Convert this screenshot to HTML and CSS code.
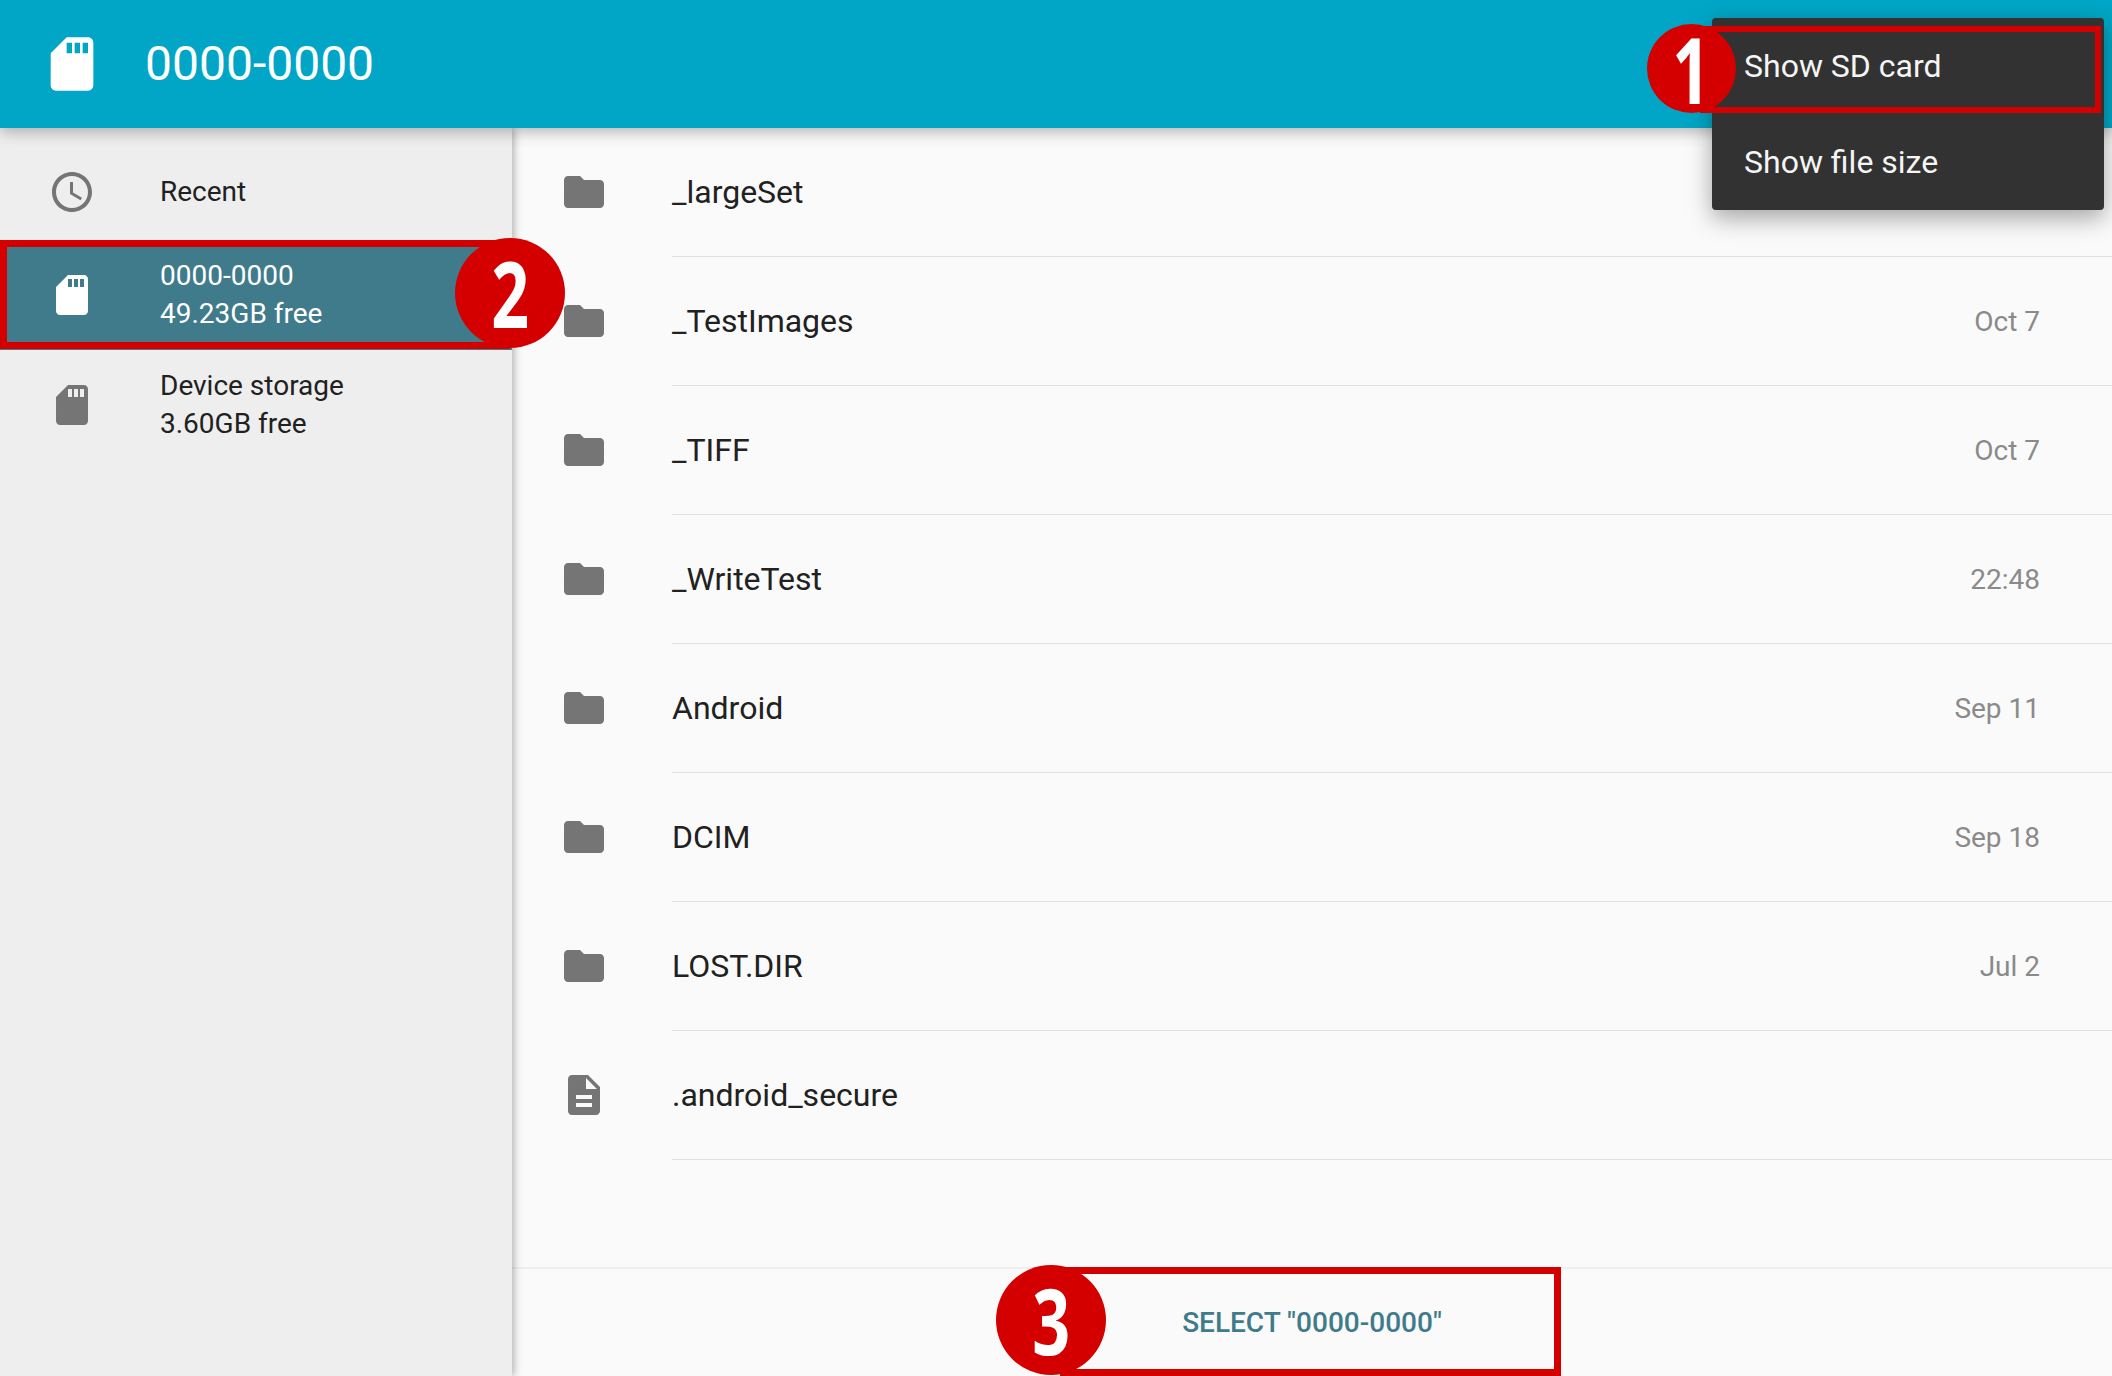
FILE: index.html
```html
<!DOCTYPE html>
<html lang="en">
<head>
<meta charset="utf-8">
<title>0000-0000</title>
<link rel="stylesheet" href="styles.css">
</head>
<body>
<div class="app">
  <svg class="defs" width="0" height="0" aria-hidden="true">
    <symbol id="sd" viewBox="0 0 24 24"><path d="M18 2h-8L4.02 8 4 20c0 1.1.9 2 2 2h12c1.1 0 2-.9 2-2V4c0-1.1-.9-2-2-2zm-6 6h-2V4h2v4zm3 0h-2V4h2v4zm3 0h-2V4h2v4z"/></symbol>
    <symbol id="clock" viewBox="0 0 24 24"><path d="M11.99 2C6.47 2 2 6.48 2 12s4.47 10 9.99 10C17.52 22 22 17.52 22 12S17.52 2 11.99 2zM12 20c-4.42 0-8-3.58-8-8s3.58-8 8-8 8 3.58 8 8-3.58 8-8 8zm.5-13H11v6l5.25 3.15.75-1.23-4.5-2.67z"/></symbol>
    <symbol id="folder" viewBox="0 0 24 24"><path d="M10 4H4c-1.1 0-1.99.9-1.99 2L2 18c0 1.1.9 2 2 2h16c1.1 0 2-.9 2-2V8c0-1.1-.9-2-2-2h-8l-2-2z"/></symbol>
    <symbol id="doc" viewBox="0 0 24 24"><path d="M14 2H6c-1.1 0-1.99.9-1.99 2L4 20c0 1.1.89 2 1.99 2H18c1.1 0 2-.9 2-2V8l-6-6zm2 16H8v-2h8v2zm0-4H8v-2h8v2zm-3-5V3.5L18.5 9H13z"/></symbol>
  </svg>

  <header class="appbar">
    <svg class="appbar-icon"><use href="#sd"/></svg>
    <h1 class="appbar-title">0000-0000</h1>
  </header>

  <div class="content">
    <nav class="sidebar">
      <div class="nav-item nav-single">
        <svg class="nav-icon"><use href="#clock"/></svg>
        <div class="nav-text"><div>Recent</div></div>
      </div>
      <div class="nav-item nav-active">
        <svg class="nav-icon"><use href="#sd"/></svg>
        <div class="nav-text"><div>0000-0000</div><div>49.23GB free</div></div>
      </div>
      <div class="nav-item">
        <svg class="nav-icon"><use href="#sd"/></svg>
        <div class="nav-text"><div>Device storage</div><div>3.60GB free</div></div>
      </div>
    </nav>

    <main class="main">
      <div class="list">
        <div class="row"><svg class="row-icon"><use href="#folder"/></svg><div class="row-body"><span class="row-name">_largeSet</span></div></div>
        <div class="row"><svg class="row-icon"><use href="#folder"/></svg><div class="row-body"><span class="row-name">_TestImages</span><span class="row-date">Oct 7</span></div></div>
        <div class="row"><svg class="row-icon"><use href="#folder"/></svg><div class="row-body"><span class="row-name">_TIFF</span><span class="row-date">Oct 7</span></div></div>
        <div class="row"><svg class="row-icon"><use href="#folder"/></svg><div class="row-body"><span class="row-name">_WriteTest</span><span class="row-date">22:48</span></div></div>
        <div class="row"><svg class="row-icon"><use href="#folder"/></svg><div class="row-body"><span class="row-name">Android</span><span class="row-date">Sep 11</span></div></div>
        <div class="row"><svg class="row-icon"><use href="#folder"/></svg><div class="row-body"><span class="row-name">DCIM</span><span class="row-date">Sep 18</span></div></div>
        <div class="row"><svg class="row-icon"><use href="#folder"/></svg><div class="row-body"><span class="row-name">LOST.DIR</span><span class="row-date">Jul 2</span></div></div>
        <div class="row"><svg class="row-icon"><use href="#doc"/></svg><div class="row-body"><span class="row-name">.android_secure</span></div></div>
      </div>
      <footer class="footer"><span class="select-btn">SELECT "0000-0000"</span></footer>
    </main>
  </div>

  <div class="menu">
    <div class="menu-item">Show SD card</div>
    <div class="menu-item">Show file size</div>
  </div>

  <div class="mark-box box-one"></div>
  <div class="mark-box box-two"></div>
  <div class="mark-box box-three"></div>
  <div class="badge badge-one"><span>1</span></div>
  <div class="badge badge-two"><span>2</span></div>
  <div class="badge badge-three"><span>3</span></div>
</div>
</body>
</html>
```

FILE: styles.css
```css
* { box-sizing: border-box; }
html, body { margin: 0; padding: 0; }
body { font-family: Roboto, "Liberation Sans", sans-serif; color: #212121; background: #fafafa; }

.defs { position: absolute; }

.app {
  position: relative;
  width: 2112px;
  height: 1376px;
  overflow: hidden;
  display: flex;
  flex-direction: column;
}

.appbar {
  position: relative;
  z-index: 3;
  flex: 0 0 128px;
  display: flex;
  align-items: center;
  padding-left: 40px;
  background: #01a6c6;
  box-shadow: 0 4px 14px rgba(0, 0, 0, 0.28);
}
.appbar-icon { width: 64px; height: 64px; fill: #fff; flex: none; }
.appbar-title {
  margin: 0 0 0 41px;
  font-size: 48px;
  font-weight: 400;
  color: #fff;
  line-height: 64px;
}

.content { flex: 1; display: flex; min-height: 0; }

.sidebar {
  position: relative;
  z-index: 2;
  flex: 0 0 512px;
  padding-top: 16px;
  background: #eeeeee;
  box-shadow: 2px 0 8px rgba(0, 0, 0, 0.3);
}
.nav-item {
  height: 110px;
  display: flex;
  align-items: center;
  padding-left: 48px;
  color: #212121;
}
.nav-single { height: 96px; }
.nav-item:last-child { height: 109px; }
.nav-icon { width: 48px; height: 48px; fill: #757575; flex: none; }
.nav-text { margin-left: 64px; font-size: 28px; line-height: 38px; }
.nav-active { background: #407b8b; color: #fff; }
.nav-active .nav-icon { fill: #fff; }

.main { flex: 1; display: flex; flex-direction: column; background: #fafafa; min-width: 0; }
.list { flex: 1; }
.row { height: 129px; display: flex; align-items: stretch; padding-left: 48px; }
.row-icon { width: 48px; height: 48px; fill: #757575; flex: none; margin-top: 40px; }
.row-body {
  flex: 1;
  margin-left: 64px;
  padding: 0 72px 0 0;
  display: flex;
  align-items: center;
  justify-content: space-between;
  border-bottom: 1px solid #e0e0e0;
}
.row-name { font-size: 32px; color: #212121; }
.row-date { font-size: 28px; color: #8a8a8a; }

.footer {
  flex: 0 0 109px;
  display: flex;
  align-items: center;
  justify-content: center;
  border-top: 2px solid #efefef;
  background: #fafafa;
}
.select-btn { font-size: 28px; font-weight: 500; color: #407b8b; }

.menu {
  position: absolute;
  z-index: 4;
  left: 1712px;
  top: 18px;
  width: 392px;
  height: 192px;
  background: #323232;
  border-radius: 4px;
  box-shadow: 0 8px 24px rgba(0, 0, 0, 0.35);
}
.menu-item {
  height: 96px;
  display: flex;
  align-items: center;
  padding-left: 32px;
  font-size: 32px;
  color: #f5f5f5;
}

.mark-box { position: absolute; z-index: 5; border: 7px solid #d40000; }
.box-one { left: 1700px; top: 26px; width: 401px; height: 87px; border-width: 6px; }
.box-two { left: 0; top: 240px; width: 510px; height: 109px; }
.box-three { left: 1060px; top: 1267px; width: 501px; height: 109px; }

.badge {
  position: absolute;
  z-index: 6;
  border-radius: 50%;
  background: #d40000;
  color: #fff;
  font-family: "Open Sans", sans-serif;
  font-weight: 700;
  font-size: 92px;
  display: flex;
  align-items: center;
  justify-content: center;
  line-height: 1;
}
.badge span { display: block; transform: scaleX(0.72); }
.badge-one { left: 1647px; top: 24px; width: 89px; height: 89px; }
.badge-two { left: 455px; top: 238px; width: 110px; height: 110px; }
.badge-three { left: 996px; top: 1265px; width: 110px; height: 110px; }
```
